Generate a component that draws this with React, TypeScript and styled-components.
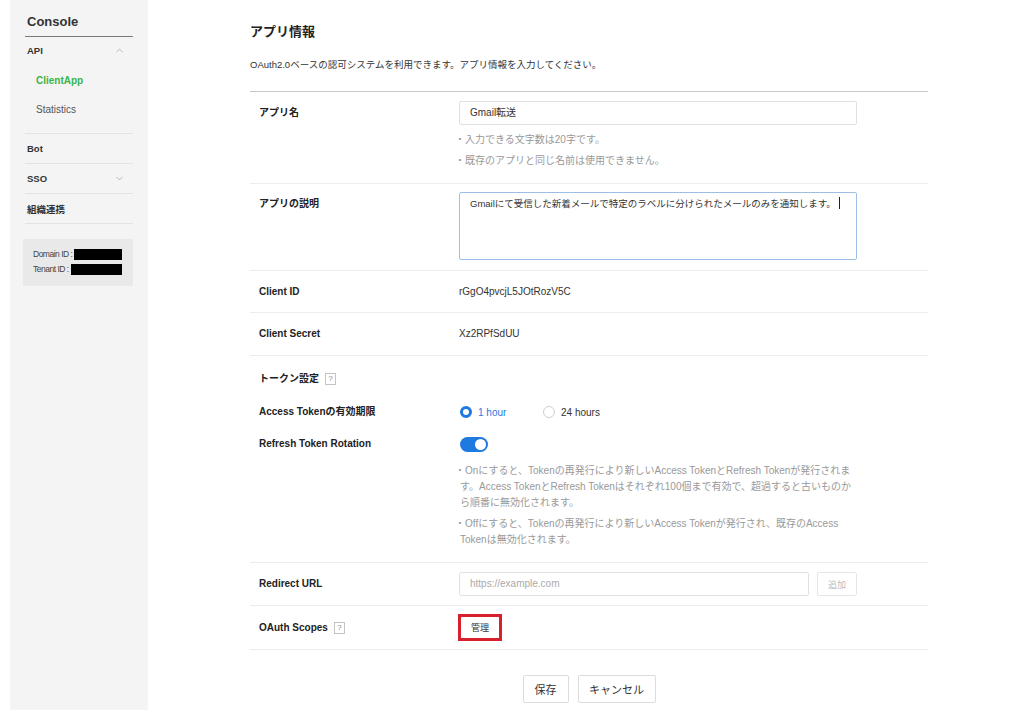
import React from "react";
import styled, { createGlobalStyle } from "styled-components";
import { ChevronUp, ChevronDown } from "lucide-react";

const FONT = `"Liberation Sans", "Noto Sans CJK JP", sans-serif`;

const Global = createGlobalStyle`
  html, body { margin: 0; padding: 0; background: #fff; }
  body { font-family: ${FONT}; color: #333; -webkit-font-smoothing: antialiased; }
  * { box-sizing: border-box; }
`;

const Page = styled.div`
  display: flex;
  min-height: 710px;
  padding-left: 10px;
`;

/* ---------- Sidebar ---------- */
const Sidebar = styled.aside`
  width: 138px;
  flex-shrink: 0;
  background: #f4f4f4;
  padding: 12px 15px 0;
`;

const Brand = styled.div`
  font-size: 13px;
  font-weight: 700;
  color: #333;
  line-height: 20px;
  padding: 0 0 4px 2px;
  border-bottom: 1px solid #7a7a7a;
`;

const NavSection = styled.div<{ $pb?: number }>`
  border-bottom: 1px solid #e3e3e3;
  padding-bottom: ${(p) => p.$pb ?? 0}px;
`;

const NavHead = styled.div<{ $h?: number }>`
  display: flex;
  align-items: center;
  justify-content: space-between;
  height: ${(p) => p.$h ?? 29}px;
  padding: 0 8px 0 2px;
  font-size: 9.5px;
  font-weight: 700;
  color: #333;
  svg { color: #999; }
`;

const SubList = styled.div`
  padding-top: 2px;
`;

const NavSub = styled.div<{ $active?: boolean }>`
  height: 29px;
  display: flex;
  align-items: center;
  padding-left: 11px;
  font-size: 10px;
  font-weight: ${(p) => (p.$active ? 700 : 400)};
  color: ${(p) => (p.$active ? "#39b54a" : "#555")};
`;

const InfoBox = styled.div`
  margin: 15px 0 0 -2px;
  background: #e9e9e9;
  height: 47px;
  padding: 10px 11px 0 10px;
  display: flex;
  flex-direction: column;
  gap: 4px;
`;

const InfoLine = styled.div`
  display: flex;
  align-items: center;
  font-size: 8.5px;
  letter-spacing: -0.5px;
  color: #444;
  line-height: 11px;
  white-space: nowrap;
`;

const Redact = styled.span`
  flex: 1;
  height: 11px;
  background: #000;
  margin-left: 2px;
`;

/* ---------- Main ---------- */
const Main = styled.main`
  flex: 1;
  padding-left: 102px;
`;

const Content = styled.div`
  width: 678px;
`;

const Title = styled.h1`
  margin: 22px 0 0;
  font-size: 13px;
  line-height: 20px;
  font-weight: 700;
  color: #222;
`;

const Lead = styled.p`
  margin: 15px 0 0;
  font-size: 9.5px;
  line-height: 16px;
  color: #333;
`;

const Form = styled.div`
  margin-top: 18px;
  border-top: 1px solid #c9c9c9;
`;

const Row = styled.div<{ $pt?: number; $pb?: number; $center?: boolean }>`
  display: grid;
  grid-template-columns: 200px 398px;
  align-items: ${(p) => (p.$center ? "center" : "start")};
  padding: ${(p) => p.$pt ?? 9}px 0 ${(p) => p.$pb ?? 9}px 9px;
  border-bottom: 1px solid #ededed;
`;

const Group = styled.div<{ $pt?: number; $pb?: number }>`
  padding: ${(p) => p.$pt ?? 9}px 0 ${(p) => p.$pb ?? 9}px 9px;
  border-bottom: 1px solid #ededed;
  display: flex;
  flex-direction: column;
`;

const SubRow = styled.div<{ $mt?: number }>`
  display: grid;
  grid-template-columns: 200px 398px;
  align-items: start;
  margin-top: ${(p) => p.$mt ?? 0}px;
`;

const Label = styled.div`
  display: flex;
  align-items: center;
  font-size: 10px;
  font-weight: 700;
  line-height: 24px;
  color: #222;
`;

const Help = styled.span`
  display: inline-flex;
  align-items: center;
  justify-content: center;
  width: 11px;
  height: 12px;
  margin-left: 6px;
  border: 1px solid #c4c4c4;
  font-size: 8px;
  font-weight: 400;
  color: #888;
  line-height: 1;
`;

const Value = styled.div`
  font-size: 10px;
  line-height: 24px;
  color: #333;
`;

const Input = styled.div<{ $placeholder?: boolean; $w?: number }>`
  width: ${(p) => (p.$w ? `${p.$w}px` : "100%")};
  height: 24px;
  border: 1px solid #e1e1e1;
  border-radius: 2px;
  padding: 0 10px;
  font-size: 10px;
  line-height: 22px;
  color: ${(p) => (p.$placeholder ? "#aaa" : "#333")};
  background: #fff;
`;

const TextArea = styled.div`
  width: 100%;
  height: 68px;
  border: 1px solid #9dbfe6;
  border-radius: 2px;
  padding: 3px 10px;
  font-size: 9.5px;
  line-height: 16px;
  color: #333;
  white-space: nowrap;
`;

const Caret = styled.span`
  display: inline-block;
  width: 1px;
  height: 12px;
  background: #222;
  margin-left: 3px;
  vertical-align: -2px;
`;

const Hints = styled.ul<{ $mt?: number }>`
  list-style: none;
  margin: ${(p) => p.$mt ?? 7}px 0 0;
  padding: 0;
  display: flex;
  flex-direction: column;
  gap: 5px;
`;

const Hint = styled.li`
  font-size: 10px;
  line-height: 16px;
  color: #999;
  margin-left: -4px;
  padding-left: 5px;
  text-indent: -5px;
  white-space: nowrap;
`;

const RadioGroup = styled.div`
  display: flex;
  align-items: center;
  height: 24px;
  padding-left: 1px;
`;

const RadioOption = styled.label<{ $checked?: boolean; $w?: number }>`
  display: inline-flex;
  align-items: center;
  gap: 6px;
  width: ${(p) => (p.$w ? `${p.$w}px` : "auto")};
  font-size: 10px;
  color: ${(p) => (p.$checked ? "#1f7ae0" : "#333")};
`;

const RadioDot = styled.span<{ $checked?: boolean }>`
  width: 12px;
  height: 12px;
  border-radius: 50%;
  background: #fff;
  border: ${(p) => (p.$checked ? "3.5px solid #1f7ae0" : "1px solid #cfcfcf")};
`;

const ToggleWrap = styled.div`
  height: 24px;
  display: flex;
  align-items: center;
  padding-left: 1px;
`;

const Toggle = styled.span`
  position: relative;
  width: 28px;
  height: 15px;
  border-radius: 8px;
  background: #1f7ae0;
  &::after {
    content: "";
    position: absolute;
    top: 2px;
    right: 2px;
    width: 11px;
    height: 11px;
    border-radius: 50%;
    background: #fff;
  }
`;

const InputRow = styled.div`
  display: flex;
  gap: 8px;
`;

const GhostButton = styled.div`
  width: 40px;
  height: 24px;
  border: 1px solid #e6e6e6;
  border-radius: 2px;
  display: flex;
  align-items: center;
  justify-content: center;
  font-size: 9px;
  color: #bdbdbd;
`;

const ManageButton = styled.div`
  width: 44px;
  height: 27px;
  margin-left: -1px;
  border: 3px solid #d7202b;
  display: flex;
  align-items: center;
  justify-content: center;
  font-size: 9px;
  color: #333;
  background: #fff;
`;

const Footer = styled.div`
  display: flex;
  justify-content: center;
  gap: 9px;
  margin-top: 25px;
`;

const Button = styled.button<{ $w: number }>`
  width: ${(p) => p.$w}px;
  height: 28px;
  background: #fff;
  border: 1px solid #dcdcdc;
  border-radius: 2px;
  font-family: ${FONT};
  font-size: 11px;
  color: #333;
  padding: 0;
`;

export default function App() {
  return (
    <>
      <Global />
      <Page>
        <Sidebar>
          <Brand>Console</Brand>
          <NavSection $pb={9}>
            <NavHead $h={27}>
              API <ChevronUp size={11} strokeWidth={1.5} />
            </NavHead>
            <SubList>
              <NavSub $active>ClientApp</NavSub>
              <NavSub>Statistics</NavSub>
            </SubList>
          </NavSection>
          <NavSection>
            <NavHead>Bot</NavHead>
          </NavSection>
          <NavSection>
            <NavHead>
              SSO <ChevronDown size={11} strokeWidth={1.5} />
            </NavHead>
          </NavSection>
          <NavSection>
            <NavHead>組織連携</NavHead>
          </NavSection>
          <InfoBox>
            <InfoLine>
              Domain ID :<Redact />
            </InfoLine>
            <InfoLine>
              Tenant ID :<Redact />
            </InfoLine>
          </InfoBox>
        </Sidebar>

        <Main>
          <Content>
            <Title>アプリ情報</Title>
            <Lead>OAuth2.0ベースの認可システムを利用できます。アプリ情報を入力してください。</Lead>
            <Form>
              <Row $pb={14}>
                <Label>アプリ名</Label>
                <div>
                  <Input>Gmail転送</Input>
                  <Hints>
                    <Hint>・入力できる文字数は20字です。</Hint>
                    <Hint>・既存のアプリと同じ名前は使用できません。</Hint>
                  </Hints>
                </div>
              </Row>
              <Row $pt={8} $pb={10}>
                <Label>アプリの説明</Label>
                <TextArea>
                  Gmailにて受信した新着メールで特定のラベルに分けられたメールのみを通知します。
                  <Caret />
                </TextArea>
              </Row>
              <Row $pb={8}>
                <Label>Client ID</Label>
                <Value>rGgO4pvcjL5JOtRozV5C</Value>
              </Row>
              <Row>
                <Label>Client Secret</Label>
                <Value>Xz2RPfSdUU</Value>
              </Row>
              <Group $pt={11} $pb={14}>
                <Label>
                  トークン設定<Help>?</Help>
                </Label>
                <SubRow $mt={9}>
                  <Label>Access Tokenの有効期限</Label>
                  <RadioGroup>
                    <RadioOption $checked $w={83}>
                      <RadioDot $checked />1 hour
                    </RadioOption>
                    <RadioOption>
                      <RadioDot />24 hours
                    </RadioOption>
                  </RadioGroup>
                </SubRow>
                <SubRow $mt={8}>
                  <Label>Refresh Token Rotation</Label>
                  <div>
                    <ToggleWrap>
                      <Toggle />
                    </ToggleWrap>
                    <Hints>
                      <Hint>
                        ・Onにすると、Tokenの再発行により新しいAccess TokenとRefresh Tokenが発行されま
                        <br />
                        す。Access TokenとRefresh Tokenはそれぞれ100個まで有効で、超過すると古いものか
                        <br />
                        ら順番に無効化されます。
                      </Hint>
                      <Hint>
                        ・Offにすると、Tokenの再発行により新しいAccess Tokenが発行され、既存のAccess
                        <br />
                        Tokenは無効化されます。
                      </Hint>
                    </Hints>
                  </div>
                </SubRow>
              </Group>
              <Row>
                <Label>Redirect URL</Label>
                <InputRow>
                  <Input $placeholder $w={350}>https://example.com</Input>
                  <GhostButton>追加</GhostButton>
                </InputRow>
              </Row>
              <Row $pt={8} $pb={8} $center>
                <Label>
                  OAuth Scopes<Help>?</Help>
                </Label>
                <ManageButton>管理</ManageButton>
              </Row>
            </Form>
            <Footer>
              <Button $w={46}>保存</Button>
              <Button $w={78}>キャンセル</Button>
            </Footer>
          </Content>
        </Main>
      </Page>
    </>
  );
}
